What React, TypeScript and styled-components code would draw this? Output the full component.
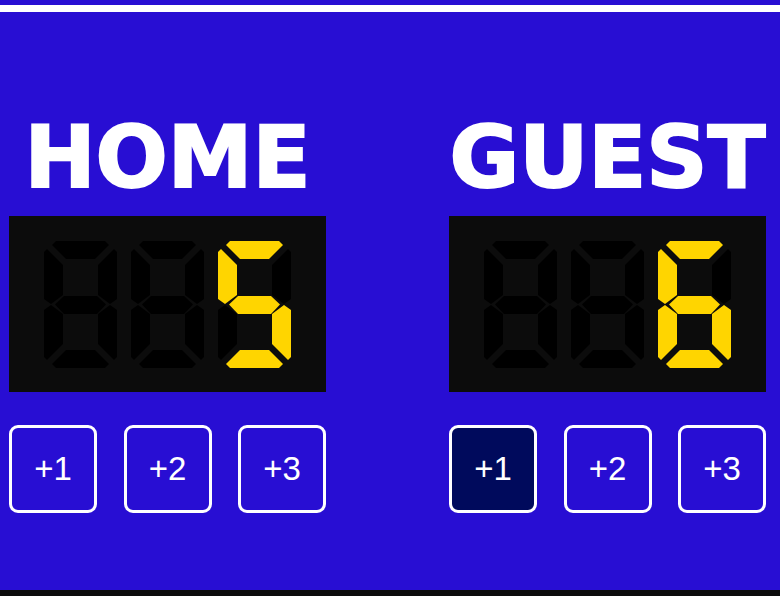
import React, { useState } from "react";
import styled, { createGlobalStyle } from "styled-components";

const Global = createGlobalStyle`
  html, body {
    margin: 0;
    padding: 0;
    background: #0c0c0c;
  }
  * { box-sizing: border-box; }
`;

const Board = styled.div`
  height: 590px;
  background: #280ed3;
  padding-top: 5px;
  display: flex;
  flex-direction: column;
`;

const Rule = styled.div`
  height: 7px;
  background: #ffffff;
`;

const Teams = styled.div`
  display: flex;
  justify-content: space-between;
  padding: 0 14px 0 9px;
`;

const Team = styled.section`
  width: 317px;
  display: flex;
  flex-direction: column;
  align-items: center;
  padding-top: 102px;
`;

const Title = styled.h2`
  margin: 0 0 14px;
  font-family: "DejaVu Sans", Verdana, sans-serif;
  font-weight: bold;
  font-size: 85px;
  line-height: 88px;
  color: #ffffff;
  -webkit-text-stroke: 2px #ffffff;
  white-space: nowrap;
`;

const Display = styled.div`
  width: 317px;
  height: 176px;
  background: #0c0c0c;
  display: flex;
  align-items: center;
  justify-content: center;
  gap: 14px;
`;

const Buttons = styled.div`
  width: 317px;
  margin-top: 33px;
  display: flex;
  justify-content: space-between;
`;

const ScoreButton = styled.button<{ $active?: boolean }>`
  width: 88px;
  height: 88px;
  border: 3px solid #ffffff;
  border-radius: 9px;
  background: ${(p) => (p.$active ? "#000a5c" : "transparent")};
  color: #ffffff;
  font-family: "Liberation Sans", Arial, sans-serif;
  font-size: 33px;
  padding: 0;
  cursor: pointer;
`;

const W = 73;
const H = 127;

type Pt = [number, number];
const A: Pt[] = [[8, 4], [12, 0], [61, 0], [65, 4], [51, 18], [22, 18]];
const F: Pt[] = [[0, 11], [3, 8], [19, 24], [19, 54], [7, 63], [0, 58]];
const G: Pt[] = [[11, 63.5], [20, 55], [53, 55], [62, 63.5], [53, 73], [20, 73]];

const mx = (p: Pt[]): Pt[] => p.map(([x, y]) => [W - x, y]);
const my = (p: Pt[]): Pt[] => p.map(([x, y]) => [x, H - y]);
const str = (p: Pt[]) => p.map((q) => q.join(",")).join(" ");

const SEGS: Record<string, string> = {
  a: str(A),
  b: str(mx(F)),
  c: str(mx(my(F))),
  d: str(my(A)),
  e: str(my(F)),
  f: str(F),
  g: str(G),
};

const DIGITS: Record<string, string> = {
  "0": "abcdef",
  "1": "bc",
  "2": "abdeg",
  "3": "abcdg",
  "4": "bcfg",
  "5": "acdfg",
  "6": "acdefg",
  "7": "abc",
  "8": "abcdefg",
  "9": "abcdfg",
};

const Segment = styled.polygon<{ $on: boolean }>`
  fill: ${(p) => (p.$on ? "#ffd500" : "#000000")};
`;

function Digit({ value, lit }: { value: string; lit: boolean }) {
  const on = lit ? DIGITS[value] : "";
  return (
    <svg width={W} height={H} viewBox={`0 0 ${W} ${H}`}>
      {Object.keys(SEGS).map((k) => (
        <Segment key={k} points={SEGS[k]} $on={on.includes(k)} />
      ))}
    </svg>
  );
}

function Score({ value }: { value: number }) {
  const s = String(value).padStart(3, "0");
  const firstSig = s.search(/[1-9]/);
  return (
    <Display>
      {s.split("").map((ch, i) => (
        <Digit
          key={i}
          value={ch}
          lit={firstSig !== -1 ? i >= firstSig : i === 2}
        />
      ))}
    </Display>
  );
}

function TeamPanel({
  name,
  score,
  onAdd,
  active,
}: {
  name: string;
  score: number;
  onAdd: (n: number) => void;
  active?: number;
}) {
  return (
    <Team>
      <Title>{name}</Title>
      <Score value={score} />
      <Buttons>
        {[1, 2, 3].map((n) => (
          <ScoreButton key={n} $active={active === n} onClick={() => onAdd(n)}>
            +{n}
          </ScoreButton>
        ))}
      </Buttons>
    </Team>
  );
}

export default function App() {
  const [home, setHome] = useState(5);
  const [guest, setGuest] = useState(6);
  return (
    <>
      <Global />
      <Board>
        <Rule />
        <Teams>
          <TeamPanel name="HOME" score={home} onAdd={(n) => setHome(home + n)} />
          <TeamPanel
            name="GUEST"
            score={guest}
            active={1}
            onAdd={(n) => setGuest(guest + n)}
          />
        </Teams>
      </Board>
    </>
  );
}
